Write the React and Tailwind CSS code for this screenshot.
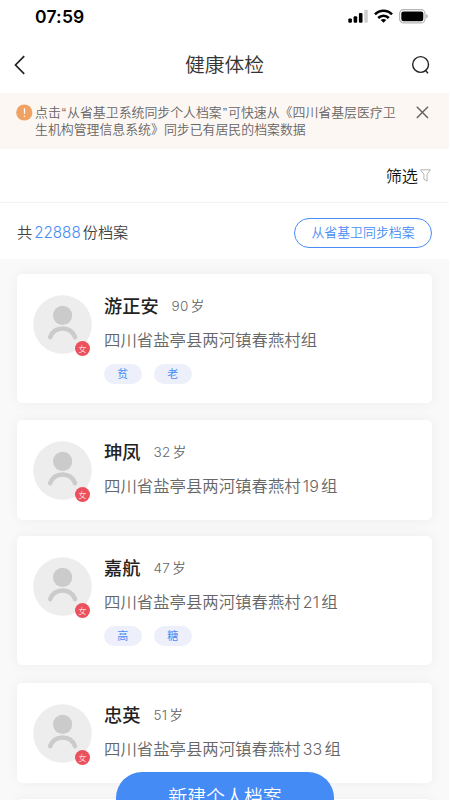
import React from "react";

const records = [
  { id: 1, name: "游正安", age: 90, group: "", tags: ["贫", "老"], spacing: "mb-[17px]" },
  { id: 2, name: "珅凤", age: 32, group: "19", tags: [], spacing: "mb-4" },
  { id: 3, name: "嘉航", age: 47, group: "21", tags: ["高", "糖"], spacing: "mb-[18px]" },
  { id: 4, name: "忠英", age: 51, group: "33", tags: [], spacing: "mb-4" },
  { id: 5, name: "", age: null, group: "", tags: [], spacing: "" }
];

function StatusBar() {
  return (
    <div className="flex h-9 shrink-0 items-start justify-between pl-[35px] pr-5">
      <span className="mt-[5px] text-[17.5px] leading-6 font-semibold tracking-[0.2px] text-black">07:59</span>
      <div className="mt-[9px] flex items-start">
        <svg width="21" height="14" viewBox="0 0 21 14">
          <rect x="0.3" y="9.5" width="3.6" height="4.3" rx="1" />
          <rect x="5.6" y="7.2" width="3.6" height="6.6" rx="1" />
          <rect x="10.9" y="4" width="3.6" height="9.8" rx="1" />
          <rect x="16.2" y="0.7" width="3.6" height="13.1" rx="1" fill="#cfcfcf" />
        </svg>
        <svg className="ml-[5px]" width="19" height="14" viewBox="0 0 19 14" fill="none" stroke="#000" strokeWidth="2.6">
          <path d="M1 5.4C5.8 0.5 13.2 0.5 18 5.4" />
          <path d="M4.2 9c3-3 7.6-3 10.6 0" />
          <path d="M6.7 11L9.5 13.8l2.8-2.8c-1.6-1.4-4-1.4-5.6 0z" fill="#000" stroke="none" />
        </svg>
        <svg className="ml-[6px]" width="30" height="15" viewBox="0 0 30 15">
          <rect x="0.6" y="0.7" width="25.4" height="13.2" rx="4" fill="none" stroke="#b5b5b5" strokeWidth="1.2" />
          <rect x="2.3" y="2.4" width="22" height="9.8" rx="2.2" />
          <path d="M27.3 5v4.4c1.8-.7 1.8-3.7 0-4.4z" fill="#999" />
        </svg>
      </div>
    </div>
  );
}

function NavBar() {
  return (
    <div className="flex h-[57px] shrink-0 items-center justify-between pl-[14px] pr-[18px]">
      <svg width="20" height="20" viewBox="0 0 20 20" fill="none" stroke="#222" strokeWidth="1.7">
        <path d="M10.2 1.2L1.5 10l8.7 8.8" />
      </svg>
      <h1 className="ml-1 mt-px text-[19.8px] leading-7 font-[350] text-[#333]">健康体检</h1>
      <svg width="20" height="20" viewBox="0 0 20 20" fill="none" stroke="#222" strokeWidth="1.4">
        <circle cx="9.6" cy="9.5" r="7.9" />
        <path d="M14.2 15l2.7 3.3" />
      </svg>
    </div>
  );
}

function Notice() {
  return (
    <div className="flex h-14 shrink-0 items-start bg-[#fdf7f3] pl-4 pr-5 pt-[11px]">
      <svg className="shrink-0" width="17" height="17" viewBox="0 0 17 17">
        <circle cx="8.3" cy="8.5" r="8.1" fill="#f1a161" />
        <path d="M8.5 4.2v5.6" stroke="#fff" strokeWidth="1.3" />
        <circle cx="8.5" cy="12.2" r="0.8" fill="#fff" />
      </svg>
      <p className="ml-[2px] text-[12.9px] leading-[17px] font-[350] whitespace-nowrap text-[#666]">
        点击<span className="mx-[1px] font-['Liberation_Sans',sans-serif]">“</span>从省基卫系统同步个人档案
        <span className="mx-[1px] font-['Liberation_Sans',sans-serif]">”</span>可快速从《四川省基层医疗卫
        <br />
        生机构管理信息系统》同步已有居民的档案数据
      </p>
      <svg className="ml-auto mt-[2px] shrink-0" width="13" height="13" viewBox="0 0 13 13" fill="none" stroke="#666" strokeWidth="1.5">
        <path d="M0.8 0.8l11.2 11.2M12 0.8L0.8 12" />
      </svg>
    </div>
  );
}

function Avatar() {
  return (
    <div className="relative h-[59px] w-[59px] shrink-0">
      <svg width="59" height="59" viewBox="0 0 59 59">
        <circle cx="29.5" cy="29.5" r="29.3" fill="#ededed" />
        <circle cx="29.6" cy="20.4" r="9.6" fill="#cbcbcb" />
        <path d="M17.2 42c4.5-11.4 20.3-11.4 24.8 0" fill="none" stroke="#cbcbcb" strokeWidth="4.6" strokeLinecap="round" />
      </svg>
      <span className="absolute top-[46px] left-[42px] flex h-[15px] w-[15px] items-center justify-center rounded-full bg-[#ec505c] text-[8px] leading-none font-light text-white">
        女
      </span>
    </div>
  );
}

function RecordCard({ record }) {
  return (
    <div
      className={`${record.spacing} ${record.tags.length ? "h-[129px]" : "h-[100px]"} flex shrink-0 rounded-[5px] bg-white pl-4 pt-[21px] shadow-[0_0_13px_rgba(0,0,0,0.05)]`}
    >
      {record.name && (
        <>
          <Avatar />
          <div className="ml-3 pt-px">
            <div className="flex h-[22px] items-center">
              <span className="text-[18.2px] font-medium text-[#222]">{record.name}</span>
              <span className="-mt-px ml-[13px] text-[13.5px] font-[350] tracking-[0.4px] text-[#666]">
                {record.age}
                <span className="ml-[2px]">岁</span>
              </span>
            </div>
            <p className="mt-[11px] text-[16.4px] leading-[22px] font-[350] text-[#666]">
              四川省盐亭县两河镇春燕村
              {record.group && <span className="mx-[2px] text-[16px] tracking-[0.2px]">{record.group}</span>}组
            </p>
            {record.tags.length > 0 && (
              <div className="mt-[13px] flex gap-[12.5px]">
                {record.tags.map((tag) => (
                  <span key={tag} className="flex h-5 w-[37.5px] items-center justify-center rounded-full bg-[#edf0fa] text-[11px] text-[#478df5]">
                    {tag}
                  </span>
                ))}
              </div>
            )}
          </div>
        </>
      )}
    </div>
  );
}

export default function App() {
  return (
    <div className="h-[800px] w-[450px] overflow-hidden bg-white font-[Inter,'Noto_Sans_CJK_SC',sans-serif]">
      <div className="relative flex h-[800px] w-[449px] flex-col overflow-hidden">
        <StatusBar />
        <NavBar />
        <Notice />

        {/* Filter */}
        <div className="flex h-[54px] shrink-0 items-center justify-end border-b border-[#f3f3f3] pr-[18px]">
          <span className="mt-px text-[16.2px] font-[350] text-[#111]">筛选</span>
          <svg className="ml-[2px]" width="11" height="13" viewBox="0 0 11 13" fill="none" stroke="#aaa" strokeWidth="0.9" strokeLinejoin="round">
            <path d="M0.6 0.8h9.8L7.1 5.3v6.8L3.9 10.2V5.3z" />
          </svg>
        </div>

        {/* Total */}
        <div className="flex h-14 shrink-0 items-center justify-between pb-px pl-[17px] pr-[17px] pt-[5px]">
          <p className="mt-px text-[15.2px] font-[350] text-[#444]">
            共<span className="mx-[2px] text-[#478df5]">22888</span>份档案
          </p>
          <button className="h-[30px] w-[138px] rounded-full border-[1.5px] border-[#478df5] text-[12.9px] font-[350] text-[#478df5]">
            从省基卫同步档案
          </button>
        </div>

        {/* Records */}
        <div className="flex min-h-0 flex-1 flex-col overflow-hidden bg-[#f9f9f9] px-[17px] pt-[15px]">
          {records.map((record) => (
            <RecordCard key={record.id} record={record} />
          ))}
        </div>

        <button className="absolute top-[772px] left-[116px] h-[52px] w-[218px] rounded-full bg-[#448bf6] text-[18.9px] font-[350] text-white">
          新建个人档案
        </button>
      </div>
    </div>
  );
}
